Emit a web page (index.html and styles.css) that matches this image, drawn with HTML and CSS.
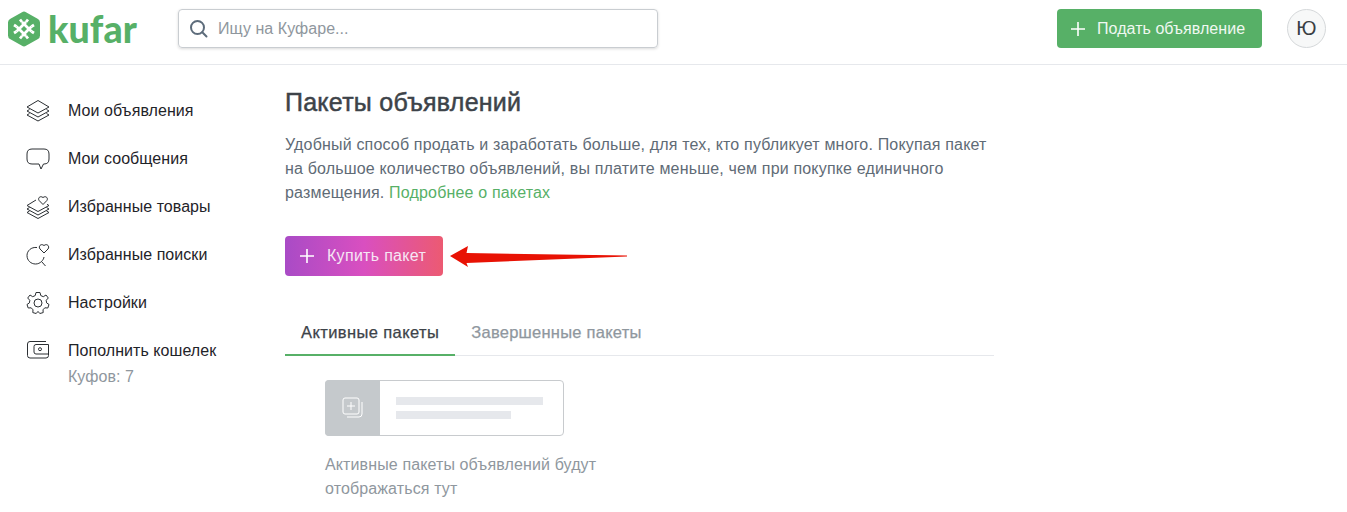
FILE: index.html
```html
<!DOCTYPE html>
<html lang="ru">
<head>
  <meta charset="UTF-8" />
  <title>Пакеты объявлений</title>
  <meta name="viewport" content="width=device-width, initial-scale=1.0" />
  <link rel="stylesheet" href="styles.css">
</head>
<body>

<header class="topbar">
  <a class="logo">
    <svg class="logo-mark" width="32" height="36" viewBox="0 0 32 36">
      <path d="M14 1.2 Q16 0 18 1.2 L30 8 Q32 9.2 32 11.5 V24.5 Q32 26.8 30 28 L18 34.8 Q16 36 14 34.8 L2 28 Q0 26.8 0 24.5 V11.5 Q0 9.2 2 8 Z" fill="#57b067"/>
      <g stroke="#fff" stroke-width="2.8" fill="none">
        <path d="M8.5 15.5 L18 25 M14 11 L23.5 20.5"/>
        <path d="M23.5 15.5 L14 25 M18 11 L8.5 20.5"/>
        <path d="M12 8.5 L14 11 M20 8.5 L18 11 M12 27.5 L14 25 M20 27.5 L18 25"/>
        <path d="M6 14 L8.5 15.5 M26 14 L23.5 15.5 M6 22 L8.5 20.5 M26 22 L23.5 20.5"/>
      </g>
    </svg>
    <span class="logo-text">kufar</span>
  </a>
  <div class="search">
    <svg width="20" height="20" viewBox="0 0 20 20" fill="none" stroke="#5d6c7b" stroke-width="2">
      <circle cx="8.5" cy="8.5" r="6.5"/>
      <path d="M13.3 13.3 L17.5 17.5" stroke-linecap="round"/>
    </svg>
    <span class="search-text">Ищу на Куфаре...</span>
  </div>
  <a class="btn btn-green">
    <svg class="plus" width="16" height="16" viewBox="0 0 16 16"><path d="M8 1 V15 M1 8 H15" stroke="#fff" stroke-width="1.6"/></svg>
    Подать объявление
  </a>
  <div class="avatar">Ю</div>
</header>

<div class="page">
  <nav class="sidebar">
    <a class="side-item">
      <svg width="24" height="24" viewBox="0 0 24 24" fill="none" stroke="#2b2f33" stroke-width="1" stroke-linejoin="round">
        <path d="M12 1.5 L23 8 L12 14 L1 8 Z"/>
        <path d="M3.5 10.5 L1 12 L12 18 L23 12 L20.5 10.5"/>
        <path d="M3.5 14.5 L1 16 L12 22 L23 16 L20.5 14.5"/>
      </svg>
      <span>Мои объявления</span>
    </a>
    <a class="side-item">
      <svg width="24" height="24" viewBox="0 0 24 24" fill="none" stroke="#2b2f33" stroke-width="1" stroke-linejoin="round">
        <path d="M6 2 H18 Q23 2 23 7 V12 Q23 17 18 17 H17.5 L15 22 L13 17 H6 Q1 17 1 12 V7 Q1 2 6 2 Z"/>
      </svg>
      <span>Мои сообщения</span>
    </a>
    <a class="side-item">
      <svg width="24" height="24" viewBox="0 0 24 24" fill="none" stroke="#2b2f33" stroke-width="1" stroke-linejoin="round">
        <path d="M10 5 L1 10.5 L12 16.5 L23 10.5 L21 9.3"/>
        <path d="M3.5 12.5 L1 14 L12 20 L23 14 L20.5 12.5"/>
        <path d="M3.5 16 L1 17.5 L12 23.5 L23 17.5 L20.5 16"/>
        <path d="M17 9.5 L13.2 5.6 C11.5 3.5 13.8 0.2 17 2.5 C20.2 0.2 22.5 3.5 20.8 5.6 Z"/>
      </svg>
      <span>Избранные товары</span>
    </a>
    <a class="side-item">
      <svg width="24" height="24" viewBox="0 0 24 24" fill="none" stroke="#2b2f33" stroke-width="1" stroke-linejoin="round">
        <path d="M11 4.5 C5 3.8 1 8 1 12.5 C1 17.5 5 21 9.5 21 C12 21 14 20 15.5 18.5 C17 17 17.8 15.5 18 14"/>
        <path d="M15.5 18.5 L19.5 23"/>
        <path d="M18 10 L14 6 C12 3.5 14.8 0 18 2.5 C21.2 0 24 3.5 22 6 Z"/>
      </svg>
      <span>Избранные поиски</span>
    </a>
    <a class="side-item">
      <svg width="24" height="24" viewBox="0 0 24 24" fill="none" stroke="#2b2f33" stroke-width="1" stroke-linejoin="round">
        <circle cx="12" cy="12" r="4"/>
        <path d="M10 1.5 H14 L14.8 4.6 L17.3 5.7 L20 4 L22.3 7 L20.2 9.3 L20.6 11.9 L23 13.5 L21.8 17 L18.8 16.8 L17 18.8 L17.2 21.6 L13.8 22.5 L12 20.4 L10.2 22.5 L6.8 21.6 L7 18.8 L5.2 16.8 L2.2 17 L1 13.5 L3.4 11.9 L3.8 9.3 L1.7 7 L4 4 L6.7 5.7 L9.2 4.6 Z"/>
      </svg>
      <span>Настройки</span>
    </a>
    <a class="side-item side-wallet">
      <svg width="24" height="24" viewBox="0 0 24 24" fill="none" stroke="#2b2f33" stroke-width="1" stroke-linejoin="round">
        <path d="M20 3.5 H4 Q1.5 3.5 1.5 6 V17.5 Q1.5 20 4 20 H20 Q22.5 20 22.5 17.5 V6.5"/>
        <path d="M22.5 6.5 H10 Q8 6.5 8 8.5 V14 Q8 16 10 16 H22.5"/>
        <circle cx="14" cy="11.2" r="1.5"/>
      </svg>
      <div>
        <span>Пополнить кошелек</span>
        <div class="side-note">Куфов: 7</div>
      </div>
    </a>
  </nav>

  <main class="content">
    <h1 class="title">Пакеты объявлений</h1>
    <p class="lead">Удобный способ продать и заработать больше, для тех, кто публикует много. Покупая пакет на большое количество объявлений, вы платите меньше, чем при покупке единичного размещения. <a class="link">Подробнее о пакетах</a></p>

    <div class="buy-row">
      <a class="btn btn-buy">
        <svg class="plus" width="16" height="16" viewBox="0 0 16 16"><path d="M8 1 V15 M1 8 H15" stroke="#fff" stroke-width="1.6"/></svg>
        Купить пакет
      </a>
      <svg class="arrow" width="180" height="28" viewBox="0 0 180 28">
        <path d="M1 14 L19 4 L17.5 11 L178 13.5 L178 14.5 L17.5 21 L19 25 Z" fill="#e81204"/>
      </svg>
    </div>

    <div class="tabs">
      <a class="tab active">Активные пакеты</a>
      <a class="tab">Завершенные пакеты</a>
    </div>

    <div class="empty">
      <div class="empty-card">
        <div class="empty-thumb">
          <svg width="24" height="24" viewBox="0 0 24 24" fill="none" stroke="#fff" stroke-width="1">
            <rect x="2" y="2" width="16" height="16" rx="2"/>
            <path d="M10 6 V14 M6 10 H14"/>
            <path d="M21 6 V18 Q21 21 18 21 H6"/>
          </svg>
        </div>
        <div class="empty-lines">
          <div class="line line-long"></div>
          <div class="line line-short"></div>
        </div>
      </div>
      <p class="empty-text">Активные пакеты объявлений будут отображаться тут</p>
    </div>
  </main>
</div>

</body>
</html>
```

FILE: styles.css
```css
:root {
  --green: #57b067;
  --text: #1f2429;
  --muted: #8f979e;
  --line: #e6e8ec;
}

body {
  margin: 0;
  height: 512px;
  overflow: hidden;
  background-color: #fff;
  font-family: "Liberation Sans", Arial, sans-serif;
  letter-spacing: 0.05px;
  color: var(--text);
}

.topbar {
  display: flex;
  align-items: flex-start;
  height: 55px;
  padding: 9px 21px 0 8px;
  border-bottom: 1px solid var(--line);
}

.logo {
  display: flex;
  align-items: center;
  gap: 8px;
  width: 170px;
  margin-top: 2px;
}

.logo-text {
  font-family: Lato, sans-serif;
  font-weight: 900;
  font-size: 37.5px;
  line-height: 36px;
  color: var(--green);
}

.search {
  display: flex;
  align-items: center;
  gap: 9px;
  width: 480px;
  height: 39px;
  box-sizing: border-box;
  padding-left: 10px;
  border: 1px solid #c9cdd1;
  border-radius: 4px;
  box-shadow: 0 1px 3px rgba(0, 0, 0, 0.15);
}

.search-text {
  font-size: 16px;
  color: #8f979e;
}

.btn {
  display: flex;
  align-items: center;
  color: #fff;
  font-size: 16px;
  border-radius: 4px;
  box-sizing: border-box;
}

.btn-green {
  width: 205px;
  height: 39px;
  margin-left: auto;
  padding-left: 13px;
  gap: 11px;
  background-color: var(--green);
  color: #f0f8f1;
}

.avatar {
  width: 39px;
  height: 39px;
  margin-left: 25px;
  box-sizing: border-box;
  display: flex;
  align-items: center;
  justify-content: center;
  border: 1px solid #d5d8da;
  border-radius: 50%;
  background-color: #f7f8f8;
  font-size: 20px;
  color: #3a3f44;
}

.page {
  display: flex;
}

.sidebar {
  width: 285px;
  padding: 22px 0 0 26px;
  box-sizing: border-box;
}

.side-item {
  display: flex;
  align-items: center;
  gap: 18px;
  height: 48px;
  font-size: 16px;
}

.side-wallet {
  align-items: flex-start;
  padding-top: 15px;
  box-sizing: border-box;
}

.side-wallet svg {
  margin-top: -4px;
}

.side-note {
  margin-top: 8px;
  color: var(--muted);
}

.content {
  width: 709px;
}

.title {
  margin: 23px 0 0;
  font-size: 25px;
  line-height: 28px;
  font-weight: normal;
  letter-spacing: 0.25px;
  -webkit-text-stroke: 0.5px #3d4349;
  color: #3d4349;
}

.lead {
  width: 706px;
  margin: 17px 0 0;
  font-size: 16px;
  line-height: 24px;
  letter-spacing: 0.17px;
  color: #5f6b76;
}

.link {
  color: var(--green);
}

.buy-row {
  position: relative;
  margin-top: 31px;
}

.btn-buy {
  width: 158px;
  height: 40px;
  padding-left: 14px;
  gap: 12px;
  background: linear-gradient(90deg, #a94bc6 0%, #d94fc0 50%, #ec5a72 100%);
  color: #f6e6f4;
  letter-spacing: 0.3px;
}

.arrow {
  position: absolute;
  left: 164px;
  top: 6px;
}

.tabs {
  display: flex;
  margin-top: 42px;
  height: 37px;
  border-bottom: 1px solid var(--line);
}

.tab {
  padding: 0 16px;
  line-height: 29px;
  font-size: 16.5px;
  letter-spacing: 0.25px;
  -webkit-text-stroke: 0.25px currentColor;
  color: #8f979e;
}

.tab.active {
  color: #3d4349;
  height: 36px;
  letter-spacing: 0.4px;
  border-bottom: 2px solid var(--green);
}

.empty {
  padding: 24px 0 0 40px;
}

.empty-card {
  display: flex;
  width: 239px;
  height: 56px;
  box-sizing: border-box;
  border: 1px solid #c8cbce;
  border-radius: 4px;
}

.empty-thumb {
  width: 55px;
  margin: -1px 0 -1px -1px;
  display: flex;
  align-items: center;
  justify-content: center;
  background-color: #c5c9cc;
  border-radius: 4px 0 0 4px;
}

.empty-lines {
  padding: 16px 0 0 16px;
}

.line {
  height: 8px;
  background-color: var(--line);
  margin-bottom: 6px;
}

.line-long {
  width: 147px;
}

.line-short {
  width: 115px;
}

.empty-text {
  width: 300px;
  margin: 17px 0 0;
  font-size: 16px;
  line-height: 24px;
  letter-spacing: 0.12px;
  color: var(--muted);
}
```
